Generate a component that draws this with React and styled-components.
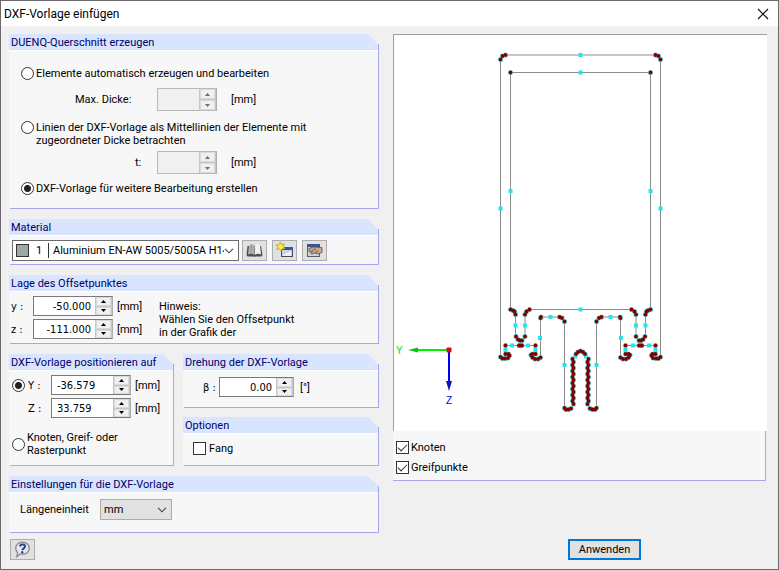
import React, { useState } from "react";
import styled, { createGlobalStyle } from "styled-components";

const GlobalStyle = createGlobalStyle`
  *, *::before, *::after { box-sizing: border-box; }
  body { margin: 0; background: #f0f0f0; }
  button, input, select { font: inherit; color: inherit; margin: 0; }
`;

const uiFont = 'Roboto, "Noto Sans", sans-serif';
const valueFont = '"DejaVu Sans Condensed", "DejaVu Sans", sans-serif';

const Dialog = styled.main`
  min-height: 100vh;
  display: flex;
  flex-direction: column;
  border: 1px solid #6b696b;
  background: #f0f0f0;
  color: #000;
  font: 11px/13px ${uiFont};
`;

const TitleBar = styled.header`
  display: flex;
  align-items: center;
  justify-content: space-between;
  height: 25px;
  padding: 0 9px 0 3px;
  background: #fff;
`;

const Title = styled.h1`
  margin: 0;
  font: 12px/16px ${uiFont};
`;

const CloseButton = styled.button`
  display: flex;
  padding: 0;
  border: 0;
  background: none;
`;

const Columns = styled.div`
  flex: 1;
  display: grid;
  grid-template-columns: 370px minmax(0, 1fr);
  grid-template-rows: auto 1fr;
  column-gap: 14px;
  row-gap: 6px;
  padding: 8px 11px 9px 8px;
`;

const Stack = styled.div`
  display: flex;
  flex-direction: column;
  gap: ${(p) => p.$gap || 10}px;
`;

const SplitRow = styled.div`
  display: grid;
  grid-template-columns: 165px minmax(0, 1fr);
  gap: 9px;
`;

const GroupBox = styled.section`
  display: flex;
  flex-direction: column;
  background:
    linear-gradient(#a7a6ea, #a7a6ea) right bottom / 1px calc(100% - 10px) no-repeat,
    linear-gradient(#a7a6ea, #a7a6ea) right bottom / calc(100% - 1px) 1px no-repeat,
    linear-gradient(#f7f7f7, #f7f7f7) 0 16px no-repeat;
`;

const GroupTitle = styled.h2`
  margin: 0 1px 0 0;
  height: 17px;
  padding-left: 2px;
  border-bottom: 1px solid #fff;
  background: #d9e5ff;
  clip-path: polygon(0 0, calc(100% - 10px) 0, 100% 10px, 100% 100%, 0 100%);
  color: #00006b;
  font: 11px/17px ${uiFont};
`;

const GroupBody = styled.div`
  flex: 1;
  padding: ${(p) => p.$pad};
`;

function Group({ title, pad, children }) {
  return (
    <GroupBox>
      <GroupTitle>{title}</GroupTitle>
      <GroupBody $pad={pad}>{children}</GroupBody>
    </GroupBox>
  );
}

const RadioInput = styled.input.attrs({ type: "radio" })`
  appearance: none;
  flex: none;
  width: 13px;
  height: 13px;
  border: 1px solid #333;
  border-radius: 50%;
  background: #fff;
  &:checked { background: radial-gradient(circle, #222 0 3px, #fff 4px); }
`;

const CheckMark = styled.input.attrs({ type: "checkbox" })`
  appearance: none;
  flex: none;
  display: grid;
  place-items: center;
  width: 13px;
  height: 13px;
  border: 1px solid #333;
  background: #fff;
  &:checked::before {
    content: "";
    width: 9px;
    height: 5px;
    border: solid #333;
    border-width: 0 0 1px 1px;
    transform: translateY(-1px) rotate(-45deg);
  }
`;

const ChoiceLabel = styled.label`
  display: flex;
  align-items: ${(p) => (p.$top ? "flex-start" : "center")};
  gap: ${(p) => p.$gap || 2}px;
  min-height: 16px;
`;

const OptionList = styled.div`
  display: grid;
`;

const FieldLine = styled.div`
  display: flex;
  align-items: center;
`;

const ThicknessLine = styled(FieldLine)`
  margin: ${(p) => p.$margin};
`;

const ThicknessLabel = styled.label`
  width: 136px;
  padding-left: ${(p) => p.$indent}px;
`;

const SpinFrame = styled.span`
  display: flex;
  width: ${(p) => p.$width}px;
  height: ${(p) => (p.$off ? 23 : 20)}px;
  border: 1px solid ${(p) => (p.$off ? "#b9b9b9" : "#7a7a7a")};
  border-right-color: #adadad;
  background: ${(p) => (p.$off ? "#f0f0f0" : "#fff")};
`;

const SpinInput = styled.input`
  flex: 1;
  min-width: 0;
  border: 0;
  padding: 0 4px 0 5px;
  background: transparent;
  font-family: ${valueFont};
  text-align: ${(p) => p.$align || "right"};
`;

const SpinButtons = styled.span`
  display: grid;
  grid-template-rows: 1fr 1fr;
  width: 17px;
  background: #c6c6c6;
  gap: 1px;
  padding: 0 1px;
`;

const SpinButton = styled.button`
  display: grid;
  place-items: center;
  min-height: 0;
  padding: 0;
  border: 1px solid #dadada;
  background: #f0f0f0;
`;

const Unit = styled.span`
  margin-left: ${(p) => p.$gap || 4}px;
`;

function Spinner({ id, value, width = 80, off, align }) {
  const fill = off ? "#6d6d6d" : "#000";
  return (
    <SpinFrame $width={width} $off={off}>
      <SpinInput id={id} defaultValue={value} disabled={off} $align={align} />
      <SpinButtons>
        <SpinButton aria-label="Erhöhen" disabled={off}>
          <svg width="5" height="3"><path d="M0 3 2.5 0 5 3z" fill={fill} /></svg>
        </SpinButton>
        <SpinButton aria-label="Verringern" disabled={off}>
          <svg width="5" height="3"><path d="M0 0 2.5 3 5 0z" fill={fill} /></svg>
        </SpinButton>
      </SpinButtons>
    </SpinFrame>
  );
}

const MaterialRow = styled.div`
  display: flex;
  gap: 5px;
`;

const MaterialBox = styled.div`
  display: flex;
  align-items: center;
  width: 227px;
  height: 21px;
  margin-right: -2px;
  padding: 0 4px 0 3px;
  border: 1px solid #6b6b6b;
  background: #fff;
`;

const Swatch = styled.span`
  flex: none;
  width: 13px;
  height: 13px;
  border: 1px solid #333;
  background: #9aa8a6;
`;

const MaterialNumber = styled.span`
  flex: none;
  width: 20px;
  height: 15px;
  padding-left: 7px;
  line-height: 15px;
  border-right: 1px solid #333;
`;

const PlainSelect = styled.select`
  appearance: none;
  flex: 1;
  min-width: 0;
  padding: 0;
  border: 0;
  background: transparent;
`;

const MaterialSelect = styled(PlainSelect)`
  margin: 0 0 0 4px;
  overflow: hidden;
  white-space: nowrap;
  text-overflow: clip;
`;

const IconButton = styled.button`
  display: grid;
  place-items: center;
  width: 25px;
  height: 21px;
  padding: 0;
  border: 1px solid #adadad;
  background: #e1e1e1;
`;

const UnitBox = styled.div`
  display: flex;
  align-items: center;
  width: 72px;
  height: 21px;
  padding: 0 4px 0 3px;
  border: 1px solid #adadad;
  background: #e1e1e1;
`;

const OffsetGrid = styled.div`
  display: grid;
  grid-template-columns: 148px 1fr;
`;

const AxisLabel = styled.label`
  width: ${(p) => p.$width}px;
  font: 11px/13px ${valueFont};
`;

const Hint = styled.p`
  margin: 4px 0 0;
`;

const PositionGrid = styled.div`
  display: grid;
  grid-template-columns: 16px 1fr;
  row-gap: 3px;
  align-items: center;
`;

const PointChoice = styled(ChoiceLabel)`
  margin-top: 13px;
`;

const UnitLabel = styled.label`
  width: 80px;
`;

const Viewer = styled.div`
  border: solid #a0a0a0;
  border-width: 1px 0 0 1px;
  background: #fff;
`;

const Drawing = styled.svg`
  display: block;
  width: 100%;
  height: auto;
`;

const ViewOptions = styled.div`
  display: grid;
  gap: 4px;
  margin-right: 1px;
  padding: 8px 0 5px 3px;
  border: solid #a7a6ea;
  border-width: 0 1px 1px 0;
  background: #f7f7f7;
`;

const FooterLeft = styled.footer`
  padding-left: 1px;
`;

const FooterRight = styled.footer`
  display: flex;
  justify-content: flex-end;
  align-items: flex-start;
  padding-right: 126px;
`;

const ApplyButton = styled.button`
  height: 21px;
  width: 73px;
  padding: 0;
  border: 2px solid #0078d7;
  background: #e1e1e1;
`;

const Chevron = () => (
  <svg width="10" height="6" viewBox="0 0 10 6">
    <path d="M1 .8 5 4.8 9 .8" fill="none" stroke="#444" strokeWidth="1.1" />
  </svg>
);

const BookIcon = () => (
  <svg width="17" height="15" viewBox="0 0 17 15">
    <path d="M.5 12 1.500 3h13.500L16.500 12l-1 1.500H9.500L8.500 14l-1-.5h-6z" fill="#4a4f68" />
    <path d="M2 11.500 3 2.500C4.500.8 7 1 8.500 2.500v9.500C6.500 10.500 4 10.500 2 11.500z" fill="#b5b1a8" />
    <path d="M8.500 2.500C10 1 12.500.8 14 2.500l1 9c-2-1-4.500-1-6.500.5z" fill="#f6f1e6" />
    <path d="M5.500 1.800 5 10.500" stroke="#8d8982" strokeWidth=".8" />
    <path d="M8.500 2.500v9.500" stroke="#77746f" strokeWidth=".8" />
  </svg>
);

const NewIcon = () => (
  <svg width="18" height="17" viewBox="0 0 18 17">
    <rect x="5.5" y="5.5" width="11" height="9" fill="#cbd1df" stroke="#454c61" />
    <path d="M5 5h12v3H5z" fill="#3457a4" />
    <path d="M7 13 15 9v5H7z" fill="#eef0f6" />
    <path d="m4.500 0 1 2.700L8.500 2 7 4.500 9 6.500 6 7 5 9 3.500 6.800.500 7.500 2 4.800 0 3l3-.3z" fill="#ffed35" stroke="#9b8b20" strokeWidth=".6" />
  </svg>
);

const EditIcon = () => (
  <svg width="18" height="15" viewBox="0 0 18 15">
    <rect x="1.5" y="1.5" width="12" height="12" fill="#cfd2d9" stroke="#596073" />
    <path d="M1 1h13v3H1z" fill="#37558e" />
    <path d="M3 5.500 7 4l9 .5v5l-4 1.500-3-1-3 1-1.500-1L7 8 3 8.500z" fill="#c9a58c" stroke="#513e35" strokeWidth=".7" />
    <path d="m7 6.500 3-.5M9 9.500l3-1.500" stroke="#513e35" strokeWidth=".7" />
  </svg>
);

const HelpIcon = () => (
  <svg width="17" height="17" viewBox="0 0 17 17">
    <path d="M8.500 1.200C12.500 1.200 15.300 3.800 15.300 7.200S12.500 13.200 8.500 13.200C7.800 13.200 7 13.100 6.300 12.900L2.800 15.600 3.700 11.700C2.500 10.600 1.700 9 1.700 7.200 1.700 3.800 4.500 1.200 8.500 1.200z" fill="#e6eaf0" stroke="#8d8f93" strokeWidth="1.4" />
    <path d="M6 5.500C6.500 2.800 11 3 11 5.600 11 7.300 8.600 7.300 8.300 9.200" fill="none" stroke="#2c4780" strokeWidth="2" />
    <circle cx="8.2" cy="11.2" r="1.2" fill="#2c4780" />
  </svg>
);

/* Left half of the symmetric profile; the axis of symmetry is x = 580.5. */
const AXIS = 580.5;

const toothNodes = [];
for (let y = 359; y <= 406; y += 3) {
  toothNodes.push([y % 2 ? 572.5 : 573.5, y]);
}

const halfNodes = [
  [505.5, 55], [502.5, 56], [500.5, 59.5], [510.5, 72.5],
  [510.5, 309.5], [513, 310.5], [514.5, 311.5], [515.5, 314.5],
  [516, 336.5], [518, 339.5], [520, 340.5], [522, 340.5], [525, 336.5],
  [525, 314.5], [526.5, 311.5], [529.5, 309.5],
  [505.5, 345.5], [519, 345.5], [520.5, 345.5], [522, 345.5], [535.5, 345.5],
  [505.5, 354], [508.5, 354], [509.5, 355.5], [508, 358], [505, 358.5], [502.5, 358.5], [500.5, 357],
  [535.5, 354], [532.5, 354], [531, 355], [532.5, 357.5], [535, 359], [538, 359], [540.5, 357.5],
  [540.5, 318], [541, 317], [559.5, 317], [562, 318], [564.5, 321.5],
  [564.5, 408], [566, 409.5], [568.5, 409.5], [571, 408.5],
  ...toothNodes,
  [576, 354], [578, 352],
];

const halfGrips = [
  [500.5, 208.5], [510.5, 191], [515.5, 325.5], [525, 325.5],
  [512, 345.5], [528, 345.5], [505.5, 350], [535.5, 350],
  [550.5, 317], [540, 338], [564.5, 365], [575, 356.5],
];

const halfLines = [
  "M580.5 55H505.5L502.5 56 500.5 59.5V357L502.5 358.5H508L509.5 356 508.5 354H505.5V345.5H535.5V354H532.5L531 355 532.5 357.5 535 359H538L540.5 357.5V318L541 317H559.5L562 318 564.5 321.5V408L566 409.5H568.5L571 408.5 573 405V359L576 354 578 352 580.5 351",
  "M580.5 72.5H510.5V309.5L513 310.5 515.5 314.5V336.5L518 339.5 520.5 341 522 340.5 525 336.5V314.5L526.5 311.5 529.5 309.5H580.5",
];

const mirror = (points) => points.map(([x, y]) => [2 * AXIS - x, y]);
const nodes = [...halfNodes, ...mirror(halfNodes), [AXIS, 351]];
const grips = [...halfGrips, ...mirror(halfGrips), [AXIS, 55], [AXIS, 72.5], [AXIS, 309.5]];

function ProfileDrawing({ showNodes, showGrips }) {
  return (
    <Drawing viewBox="394 35 373 396" role="img" aria-label="Querschnitt">
      <g fill="none" stroke="#8c8c8c">
        {halfLines.map((d) => (
          <g key={d}>
            <path d={d} />
            <path d={d} transform="matrix(-1 0 0 1 1161 0)" />
          </g>
        ))}
      </g>
      {showGrips && grips.map(([x, y], i) => (
        <rect key={i} x={x - 2} y={y - 2} width="4" height="4" fill="#1ee6ee" />
      ))}
      {showNodes && nodes.map(([x, y], i) => (
        <circle key={i} cx={x} cy={y} r="2.6" fill="#6fdede" />
      ))}
      {showNodes && nodes.map(([x, y], i) => (
        <circle key={i} cx={x} cy={y} r="1.9" fill="#800000" />
      ))}
      <path d="M449 350H417" stroke="#00f000" strokeWidth="2" />
      <path d="M408 350 418 347.5V352.5z" fill="#10c010" />
      <path d="M449 350V382" stroke="#0000f5" strokeWidth="2" />
      <path d="M449 391 446 381H452z" fill="#1010b8" />
      <rect x="446.5" y="347.5" width="5" height="5" rx="1" fill="#d01010" />
      <g fontFamily="Liberation Sans, sans-serif" fontSize="10">
        <text x="396" y="354" fill="#00e000">Y</text>
        <text x="446" y="404" fill="#0000f0">Z</text>
      </g>
    </Drawing>
  );
}

export default function App() {
  const [showNodes, setShowNodes] = useState(true);
  const [showGrips, setShowGrips] = useState(true);

  return (
    <>
      <GlobalStyle />
      <Dialog>
        <TitleBar>
          <Title>DXF-Vorlage einfügen</Title>
          <CloseButton aria-label="Schließen">
            <svg width="12" height="12"><path d="M1 1 11 11M11 1 1 11" stroke="#111" strokeWidth="1.2" /></svg>
          </CloseButton>
        </TitleBar>
        <Columns>
          <Stack>
            <Group title="DUENQ-Querschnitt erzeugen" pad="14px 12px 13px">
              <OptionList>
                <ChoiceLabel>
                  <RadioInput name="mode" />
                  Elemente automatisch erzeugen und bearbeiten
                </ChoiceLabel>
                <ThicknessLine $margin="7px 0 10px">
                  <ThicknessLabel htmlFor="max" $indent={54}>Max. Dicke:</ThicknessLabel>
                  <Spinner id="max" width={60} off />
                  <Unit $gap={14}>[mm]</Unit>
                </ThicknessLine>
                <ChoiceLabel $top>
                  <RadioInput name="mode" />
                  <span>Linien der DXF-Vorlage als Mittellinien der Elemente mit<br />zugeordneter Dicke betrachten</span>
                </ChoiceLabel>
                <ThicknessLine $margin="4px 0 6px">
                  <ThicknessLabel htmlFor="t" $indent={114}>t:</ThicknessLabel>
                  <Spinner id="t" width={60} off />
                  <Unit $gap={14}>[mm]</Unit>
                </ThicknessLine>
                <ChoiceLabel>
                  <RadioInput name="mode" defaultChecked />
                  DXF-Vorlage für weitere Bearbeitung erstellen
                </ChoiceLabel>
              </OptionList>
            </Group>

            <Group title="Material" pad="4px 3px">
              <MaterialRow>
                <MaterialBox>
                  <Swatch />
                  <MaterialNumber>1</MaterialNumber>
                  <MaterialSelect aria-label="Material">
                    <option>Aluminium EN-AW 5005/5005A H14</option>
                  </MaterialSelect>
                  <Chevron />
                </MaterialBox>
                <IconButton aria-label="Materialbibliothek"><BookIcon /></IconButton>
                <IconButton aria-label="Neues Material"><NewIcon /></IconButton>
                <IconButton aria-label="Material bearbeiten"><EditIcon /></IconButton>
              </MaterialRow>
            </Group>

            <Group title="Lage des Offsetpunktes" pad="4px 3px 5px 2px">
              <OffsetGrid>
                <Stack $gap={3}>
                  <FieldLine>
                    <AxisLabel htmlFor="oy" $width={22}>y :</AxisLabel>
                    <Spinner id="oy" value="-50.000" />
                    <Unit>[mm]</Unit>
                  </FieldLine>
                  <FieldLine>
                    <AxisLabel htmlFor="oz" $width={22}>z :</AxisLabel>
                    <Spinner id="oz" value="-111.000" />
                    <Unit>[mm]</Unit>
                  </FieldLine>
                </Stack>
                <Hint>Hinweis:<br />Wählen Sie den Offsetpunkt<br />in der Grafik der</Hint>
              </OffsetGrid>
            </Group>

            <SplitRow>
              <Group title="DXF-Vorlage positionieren auf" pad="4px 3px 7px">
                <PositionGrid>
                  <RadioInput name="target" aria-label="Koordinaten" defaultChecked />
                  <FieldLine>
                    <AxisLabel htmlFor="py" $width={23}>Y :</AxisLabel>
                    <Spinner id="py" value="-36.579" align="left" />
                    <Unit>[mm]</Unit>
                  </FieldLine>
                  <span />
                  <FieldLine>
                    <AxisLabel htmlFor="pz" $width={23}>Z :</AxisLabel>
                    <Spinner id="pz" value="33.759" align="left" />
                    <Unit>[mm]</Unit>
                  </FieldLine>
                </PositionGrid>
                <PointChoice>
                  <RadioInput name="target" />
                  <span>Knoten, Greif- oder<br />Rasterpunkt</span>
                </PointChoice>
              </Group>
              <Stack $gap={9}>
                <Group title="Drehung der DXF-Vorlage" pad="6px 20px 11px">
                  <FieldLine>
                    <AxisLabel htmlFor="beta" $width={16}>β :</AxisLabel>
                    <Spinner id="beta" value="0.00" width={75} />
                    <Unit $gap={6}>[°]</Unit>
                  </FieldLine>
                </Group>
                <Group title="Optionen" pad="6px 10px 10px">
                  <ChoiceLabel $gap={3}><CheckMark />Fang</ChoiceLabel>
                </Group>
              </Stack>
            </SplitRow>

            <Group title="Einstellungen für die DXF-Vorlage" pad="6px 11px 13px">
              <FieldLine>
                <UnitLabel htmlFor="unit">Längeneinheit</UnitLabel>
                <UnitBox>
                  <PlainSelect id="unit"><option>mm</option></PlainSelect>
                  <Chevron />
                </UnitBox>
              </FieldLine>
            </Group>
          </Stack>

          <div>
            <Viewer><ProfileDrawing showNodes={showNodes} showGrips={showGrips} /></Viewer>
            <ViewOptions>
              <ChoiceLabel>
                <CheckMark checked={showNodes} onChange={(e) => setShowNodes(e.target.checked)} />
                Knoten
              </ChoiceLabel>
              <ChoiceLabel>
                <CheckMark checked={showGrips} onChange={(e) => setShowGrips(e.target.checked)} />
                Greifpunkte
              </ChoiceLabel>
            </ViewOptions>
          </div>

          <FooterLeft>
            <IconButton aria-label="Hilfe"><HelpIcon /></IconButton>
          </FooterLeft>
          <FooterRight>
            <ApplyButton>Anwenden</ApplyButton>
          </FooterRight>
        </Columns>
      </Dialog>
    </>
  );
}
